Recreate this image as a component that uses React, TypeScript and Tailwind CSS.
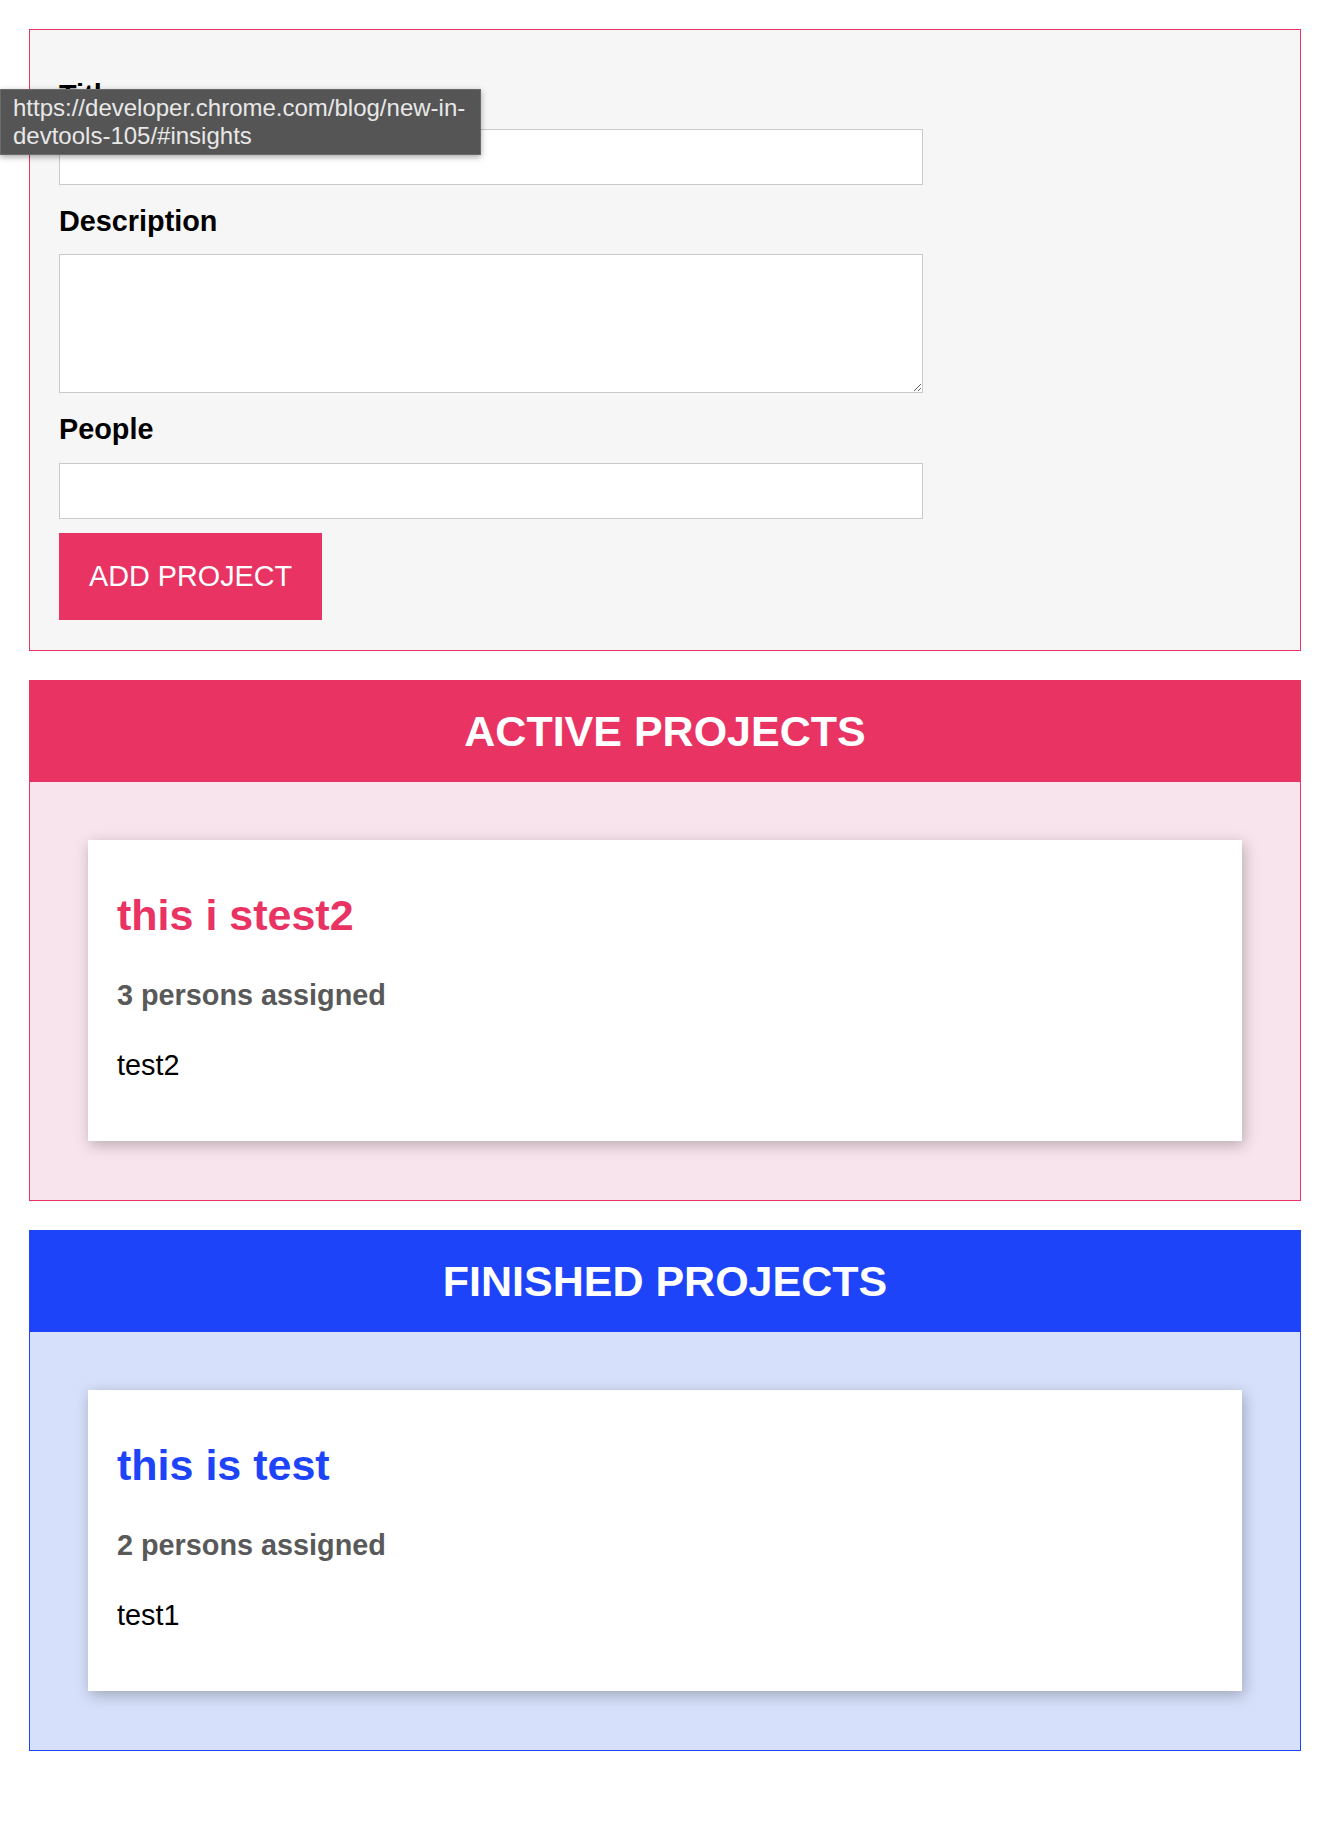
import { FormEvent } from "react"

interface Project {
  id: string
  title: string
  people: number
  description: string
}

const activeProjects: Project[] = [{ id: "p2", title: "this i stest2", people: 3, description: "test2" }]
const finishedProjects: Project[] = [{ id: "p1", title: "this is test", people: 2, description: "test1" }]

function ProjectItem({ project, tone }: { project: Project; tone: "active" | "finished" }) {
  return (
    <li className="m-[29px] bg-white px-[29px] pt-[29px] pb-[29px] shadow-[2px_4px_14px_rgba(0,0,0,0.26)]">
      <h2
        className={
          tone === "active"
            ? "mt-[16px] text-[43px] leading-[61px] font-bold text-[#e83363]"
            : "mt-[16px] text-[43px] leading-[61px] font-bold text-[#1d44f8]"
        }
      >
        {project.title}
      </h2>
      <h3 className="mt-[29px] mb-[29px] text-[28.8px] leading-[41px] font-bold text-[#595959]">
        {project.people} persons assigned
      </h3>
      <p className="mb-[27px] text-[28.8px] leading-[40px] text-black">{project.description}</p>
    </li>
  )
}

function ProjectList({ type, projects }: { type: "active" | "finished"; projects: Project[] }) {
  const isActive = type === "active"
  return (
    <section
      className={
        isActive
          ? "mt-[29px] ml-[29px] mr-[25px] border border-[#e83363]"
          : "mt-[29px] ml-[29px] mr-[25px] border border-[#1d44f8]"
      }
    >
      <header
        className={
          isActive
            ? "flex h-[101px] items-center justify-center bg-[#e83363]"
            : "flex h-[101px] items-center justify-center bg-[#1d44f8]"
        }
      >
        <h2 className="text-[43px] font-bold uppercase text-white">{type} projects</h2>
      </header>
      <ul className={isActive ? "bg-[#f8e4ed] px-[29px] pt-[29px] pb-[30px]" : "bg-[#d6e0fa] px-[29px] pt-[29px] pb-[30px]"}>
        {projects.map((p) => (
          <ProjectItem key={p.id} project={p} tone={type} />
        ))}
      </ul>
    </section>
  )
}

export default function App() {
  const handleSubmit = (e: FormEvent) => {
    e.preventDefault()
  }

  return (
    <div className="relative min-h-[1846px] bg-white pt-[29px] pb-[29px] font-['Liberation_Sans',Arial,sans-serif] text-black">
      <form
        onSubmit={handleSubmit}
        className="ml-[29px] mr-[25px] border border-[#e83363] bg-[#f6f6f6] px-[29px] pt-[30px] pb-[30px]"
      >
        <div>
          <label htmlFor="title" className="mt-[15px] block text-[28.8px] leading-[40px] font-bold">
            Title
          </label>
          <input
            id="title"
            type="text"
            className="mt-[14px] block h-[56px] w-full max-w-[864px] border border-[#cacaca] bg-white px-[11px] text-[28.8px] outline-none"
          />
        </div>
        <div>
          <label htmlFor="description" className="mt-[16px] block text-[28.8px] leading-[40px] font-bold">
            Description
          </label>
          <textarea
            id="description"
            className="mt-[13px] block h-[139px] w-full max-w-[864px] border border-[#cacaca] bg-white px-[11px] text-[28.8px] outline-none"
          />
        </div>
        <div>
          <label htmlFor="people" className="mt-[16px] block text-[28.8px] leading-[40px] font-bold">
            People
          </label>
          <input
            id="people"
            type="number"
            className="mt-[14px] block h-[56px] w-full max-w-[864px] border border-[#cacaca] bg-white px-[11px] text-[28.8px] outline-none"
          />
        </div>
        <button
          type="submit"
          className="mt-[14px] block h-[87px] border border-[#e83363] bg-[#e83363] px-[29px] text-[28.8px] text-white"
        >
          ADD PROJECT
        </button>
      </form>

      <ProjectList type="active" projects={activeProjects} />
      <ProjectList type="finished" projects={finishedProjects} />

      {/* link preview bubble from the browser, sits over the form */}
      <div className="absolute left-0 top-[89px] w-[481px] border border-[#6b6b6b] bg-[#555555] py-[4px] pl-[12px] text-[24px] leading-[28px] text-[#e8e8e8] shadow-[0_2px_6px_rgba(0,0,0,0.35)]">
        <div>https://developer.chrome.com/blog/new-in-</div>
        <div>devtools-105/#insights</div>
      </div>
    </div>
  )
}
